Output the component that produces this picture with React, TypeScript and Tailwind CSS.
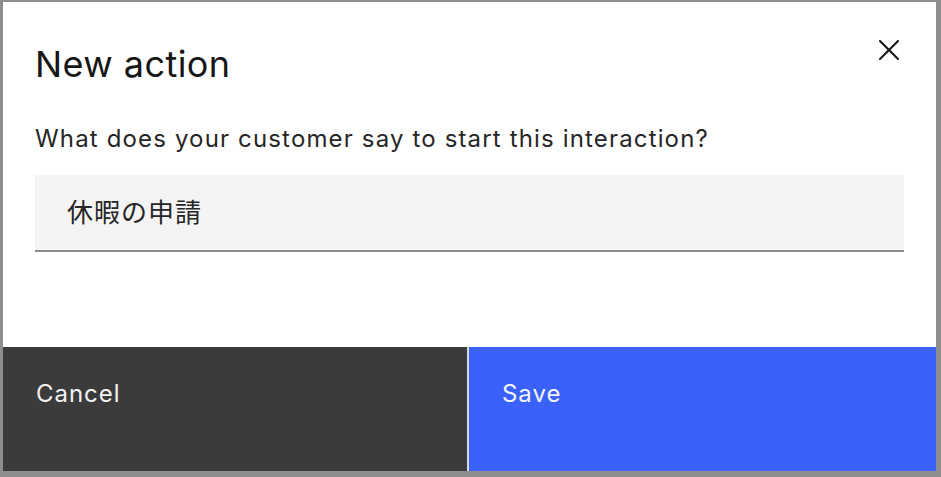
import { X } from 'lucide-react';

export default function App() {
  return (
    <div className="w-[941px] h-[477px] bg-[#8e8e8e] pl-[3px] pt-[2px] pr-[5px] pb-[6px] font-['Inter','Noto_Sans_CJK_JP',sans-serif]">
      <div className="flex h-full flex-col bg-white">
        <div className="relative flex-1 px-[32px]">
          <h2 className="pt-[36px] text-[36px] leading-[52px] tracking-[0.012em] text-[#161616]">New action</h2>
          <button className="absolute right-[29px] top-[30px] text-[#161616]">
            <X className="h-[36px] w-[36px]" strokeWidth={1.4} />
          </button>
          <p className="mt-[33px] text-[24px] leading-[32px] tracking-[0.048em] text-[#262626]">
            What does your customer say to start this interaction?
          </p>
          <div className="mt-[20px] flex h-[77px] items-center border-b-2 border-[#8d8d8d] bg-[#f4f4f4] px-[32px] text-[26px] tracking-[1px] text-[#262626]">
            休暇の申請
          </div>
        </div>
        <div className="flex h-[124px] text-[24px] tracking-[0.04em]">
          <button className="w-[464px] bg-[#3b3b3b] px-[33px] pb-[30px] text-left text-[#f2f2f2]">Cancel</button>
          <div className="w-[2px] bg-[#d9d9d9]" />
          <button className="flex-1 bg-[#3a61f9] px-[33px] pb-[30px] text-left text-[#f2f4ff]">Save</button>
        </div>
      </div>
    </div>
  );
}
